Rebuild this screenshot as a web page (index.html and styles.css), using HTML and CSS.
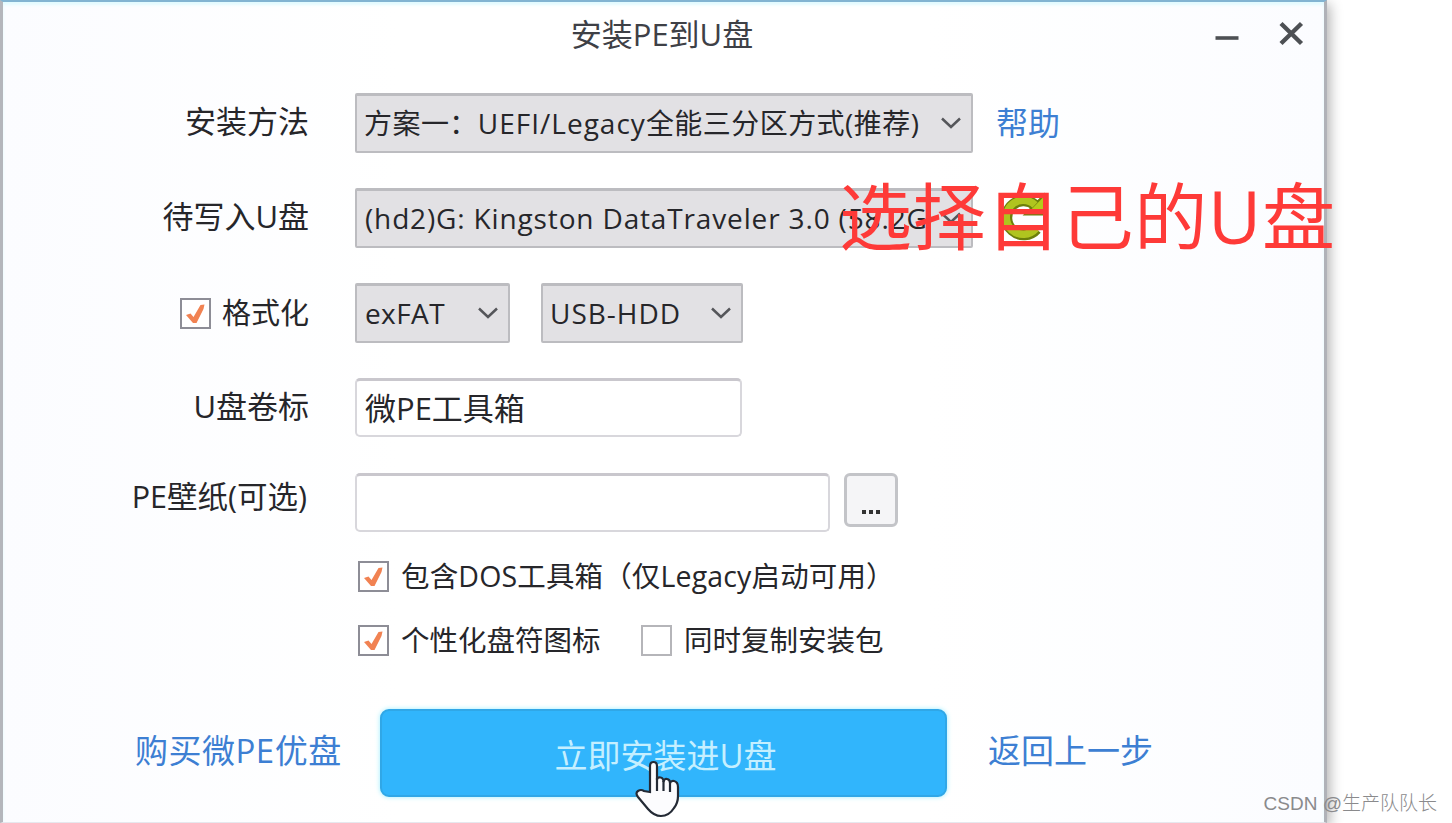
FILE: index.html
```html
<!DOCTYPE html>
<html lang="zh-CN">
<head>
    <meta charset="UTF-8">
    <meta name="viewport" content="width=device-width, initial-scale=1.0">
    <title>安装PE到U盘</title>
    <link rel="stylesheet" href="styles.css">
</head>
<body>
    <div class="window">
        <div class="titlebar">
            <h1>安装PE到U盘</h1>
            <div class="window-buttons">
                <svg width="26" height="28" viewBox="0 0 26 28"><path d="M1.500 18H24.500" stroke="#4d5054" stroke-width="3.600"/></svg>
                <svg width="26" height="28" viewBox="0 0 26 28"><path d="M3 3.500L23.500 23.500M23.500 3.500L3 23.500" stroke="#4d5054" stroke-width="4.400"/></svg>
            </div>
        </div>

        <div class="form">
            <div class="row">
                <label class="label">安装方法</label>
                <div class="select wide">
                    <span class="method">方案一：<span class="latin">UEFI/Legacy</span>全能三分区方式(推荐)</span>
                    <svg class="arrow" viewBox="0 0 20 12"><path d="M1 1.500L10 10L19 1.500"/></svg>
                </div>
                <a class="link help">帮助</a>
            </div>

            <div class="row">
                <label class="label">待写入U盘</label>
                <div class="select wide">
                    <span class="disk">(hd2)G: Kingston DataTraveler 3.0 (58.2G</span>
                    <svg class="arrow" viewBox="0 0 20 12"><path d="M1 1.500L10 10L19 1.500"/></svg>
                </div>
                <svg class="refresh" width="50" height="50" viewBox="0 0 50 50">
                    <path d="M37 13A17 17 0 1 0 38.500 37" fill="none" stroke="#6c7f0b" stroke-width="11"/>
                    <path d="M27 22.500L46 22.500L46 3Z" fill="#b5cc1b" stroke="#6c7f0b" stroke-width="2"/>
                    <path d="M37 13A17 17 0 1 0 38 36.500" fill="none" stroke="#b0c41f" stroke-width="7.500"/>
                </svg>
            </div>

            <div class="row">
                <label class="label format"><svg class="check" viewBox="0 0 27 27"><path d="M4 15L8.500 13.500L11.500 17L18.500 5L22.500 4.500L21.500 9L14.500 23H11Z"/></svg>格式化</label>
                <div class="select fs">
                    <span class="latin">exFAT</span>
                    <svg class="arrow" viewBox="0 0 20 12"><path d="M1 1.500L10 10L19 1.500"/></svg>
                </div>
                <div class="select mode">
                    <span class="latin">USB-HDD</span>
                    <svg class="arrow" viewBox="0 0 20 12"><path d="M1 1.500L10 10L19 1.500"/></svg>
                </div>
            </div>

            <div class="row">
                <label class="label">U盘卷标</label>
                <div class="input volume">微PE工具箱</div>
            </div>

            <div class="row">
                <label class="label wallpaper">PE壁纸(可选)</label>
                <div class="input path"></div>
                <div class="browse"><i></i><i></i><i></i></div>
            </div>
        </div>

        <div class="options">
            <div class="option-row">
                <span class="option"><svg class="check" viewBox="0 0 27 27"><path d="M4 15L8.500 13.500L11.500 17L18.500 5L22.500 4.500L21.500 9L14.500 23H11Z"/></svg><span class="dos">包含DOS工具箱（仅Legacy启动可用）</span></span>
            </div>
            <div class="option-row">
                <span class="option first"><svg class="check" viewBox="0 0 27 27"><path d="M4 15L8.500 13.500L11.500 17L18.500 5L22.500 4.500L21.500 9L14.500 23H11Z"/></svg>个性化盘符图标</span>
                <span class="option"><svg class="check off" viewBox="0 0 27 27"></svg>同时复制安装包</span>
            </div>
        </div>

        <div class="footer">
            <a class="link buy">购买微PE优盘</a>
            <div class="install">立即安装进U盘</div>
            <a class="link back">返回上一步</a>
        </div>
    </div>

    <svg class="cursor" width="46" height="58" viewBox="0 0 46 58">
        <path d="M15 32V6Q15 2 18.500 2Q22 2 22 6V20Q22 17 25.500 17.500Q28.500 18 28.500 22Q29 18.500 32 19Q35 19.500 35 23Q36 20.500 39 21Q43 22 43 27V36Q43 43 39 48Q34 56 26 56Q19 56 13 49L3 37Q0 33 3 31Q6 29 9 31Z" fill="#fcfcfe" stroke="#242a35" stroke-width="2.200"/>
        <path d="M22 18V31M28.500 21V31M35 23V32" stroke="#242a35" stroke-width="2.200"/>
    </svg>
    <div class="note">选择自己的U盘</div>
    <div class="watermark">CSDN @生产队队长</div>
</body>
</html>
```

FILE: styles.css
```css
* {
    margin: 0;
    padding: 0;
    box-sizing: border-box;
}

body {
    width: 1452px;
    height: 823px;
    overflow: hidden;
    position: relative;
    background: #fff;
    color: #26262a;
    font-family: "Open Sans", "Noto Sans CJK SC", sans-serif;
}

.window {
    width: 1327px;
    height: 823px;
    border-top: 2px solid #82b4d2;
    border-left: 3px solid #b4b6bc;
    border-right: 3px solid #b0b2b8;
    border-bottom: 1px solid #e6e8ee;
    background: linear-gradient(90deg, #fbfcff 0%, #fff 30%, #fff 70%, #fbfcff 100%);
    box-shadow: 3px 4px 12px rgba(0, 0, 0, 0.3), inset 0 3px 3px #e2fbff;
}

.titlebar {
    height: 91px;
    display: flex;
    justify-content: flex-end;
}

h1 {
    flex: 1;
    padding-left: 107px;
    text-align: center;
    font-size: 31px;
    font-weight: 400;
    line-height: 64px;
    color: #3e4046;
}

.window-buttons {
    display: flex;
    gap: 38px;
    padding: 18px 20px 0 0;
}

.form {
    display: flex;
    flex-direction: column;
    gap: 35px;
}

.row {
    display: flex;
    height: 60px;
}

.label {
    width: 306px;
    margin-right: 46px;
    text-align: right;
    font-size: 31px;
    line-height: 56px;
    white-space: nowrap;
}

.wallpaper {
    padding-right: 2px;
    font-size: 30.5px;
    line-height: 46px;
}

.format {
    display: flex;
    justify-content: flex-end;
    align-items: center;
    gap: 11px;
    font-size: 29px;
    line-height: 60px;
}

.select {
    height: 60px;
    display: flex;
    justify-content: space-between;
    align-items: center;
    padding: 0 10px 2px 8px;
    border: 2px solid #bcbcc0;
    border-top-width: 3px;
    border-radius: 2px;
    background: #e2e1e4;
    font-size: 28px;
    line-height: 54px;
    white-space: nowrap;
}

.wide {
    width: 618px;
}

.fs {
    width: 155px;
}

.mode {
    width: 202px;
    margin-left: 31px;
    padding-left: 7px;
}

.method {
    letter-spacing: 0.45px;
    margin-left: -1px;
}

.latin {
    letter-spacing: 1px;
}

.fs .latin {
    letter-spacing: 0.4px;
}

.disk {
    letter-spacing: 0.85px;
}

.arrow {
    width: 20px;
    height: 12px;
    flex: none;
    fill: none;
    stroke: #55565a;
    stroke-width: 2.5;
}

.link {
    color: #3d7fd3;
}

.help {
    margin-left: 23px;
    font-size: 32px;
    line-height: 60px;
}

.refresh {
    margin: 4px 0 0 25px;
}

.input {
    height: 59px;
    padding-left: 8px;
    border: 2px solid #d8d7dc;
    border-top: 3px solid #c9c7cd;
    border-radius: 5px;
    background: #fff;
    font-size: 31px;
    line-height: 54px;
}

.volume {
    width: 387px;
}

.path {
    width: 475px;
}

.browse {
    width: 54px;
    height: 54px;
    margin-left: 14px;
    padding-bottom: 10px;
    display: flex;
    justify-content: center;
    align-items: flex-end;
    gap: 3px;
    border: 3px solid #c3c4c8;
    border-radius: 6px;
    background: #f5f5f7;
}

.browse i {
    width: 4px;
    height: 4px;
    background: #333;
}

.options {
    padding: 11px 0 0 355px;
    font-size: 28.5px;
}

.option-row {
    display: flex;
    height: 64px;
    line-height: 60px;
}

.option {
    display: flex;
    align-items: center;
    gap: 12px;
    white-space: nowrap;
}

.first {
    width: 283px;
}

.dos {
    letter-spacing: 0.15px;
}

.check {
    width: 31px;
    height: 31px;
    flex: none;
    border: 2px solid #8d8d96;
    background: #fff;
    fill: #f18252;
}

.off {
    border-color: #b5b5b9;
}

.footer {
    display: flex;
    padding: 37px 0 0 132px;
    font-size: 33px;
    line-height: 84px;
    white-space: nowrap;
}

.buy {
    width: 245px;
    letter-spacing: 0.5px;
}

.install {
    width: 567px;
    height: 88px;
    padding-left: 4px;
    border-radius: 9px;
    border: 2px solid #30a7e7;
    background: #31b5fc;
    box-shadow: 0 0 5px #9eeeff;
    text-align: center;
    color: #c5efff;
    line-height: 89px;
}

.back {
    margin-left: 41px;
}

/* mouse pointer over the install button */
.cursor {
    position: absolute;
    left: 635px;
    top: 760px;
}

.note {
    position: absolute;
    left: 839px;
    top: 163px;
    font-size: 73px;
    line-height: 106px;
    letter-spacing: 0.8px;
    color: #fe3a38;
    white-space: nowrap;
}

.watermark {
    position: absolute;
    right: 15px;
    bottom: 5px;
    font-family: "Liberation Sans", "Noto Sans CJK SC", sans-serif;
    font-size: 19px;
    font-weight: 300;
    line-height: 28px;
    color: #8a8a8c;
}
```
